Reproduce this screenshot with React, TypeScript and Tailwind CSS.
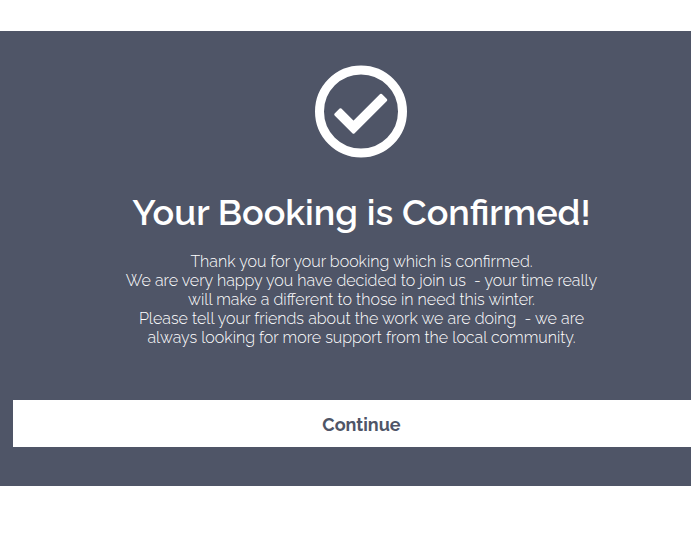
function ConfirmedIcon() {
  return (
    <svg className="size-24" viewBox="0 0 96 96" aria-hidden="true">
      <circle cx="47" cy="48.5" r="41.5" fill="none" stroke="white" strokeWidth="9" />
      <path
        d="M21.5 51.5 L26.5 46.5 L39.5 59.5 L67 32 L72 37 L39.5 69.5 Z"
        fill="white"
        stroke="white"
        strokeWidth="2.5"
        strokeLinejoin="round"
      />
    </svg>
  );
}

const message = [
  "Thank you for your booking which is confirmed.",
  "We are very happy you have decided to join us  - your time really",
  "will make a different to those in need this winter.",
  "Please tell your friends about the work we are doing  - we are",
  "always looking for more support from the local community.",
];

export default function App() {
  return (
    <main className="overflow-hidden bg-white py-[31px] font-['Raleway','Lato',sans-serif]">
      <section className="-mr-8 flex flex-col items-center bg-[#4f5567] px-[13px] pt-8 pb-[39px] text-white">
        <ConfirmedIcon />
        <h1 className="mt-8 text-center text-4xl leading-[42px] font-semibold whitespace-nowrap">
          Your Booking is Confirmed!
        </h1>
        <p className="mt-[19px] text-center text-base leading-[19px] font-light whitespace-pre">
          {message.join("\n")}
        </p>
        <button
          type="button"
          className="mt-[53px] w-full bg-white pt-[13px] pb-[11px] text-lg leading-[23px] font-bold text-[#4f5567]"
        >
          Continue
        </button>
      </section>
    </main>
  );
}
